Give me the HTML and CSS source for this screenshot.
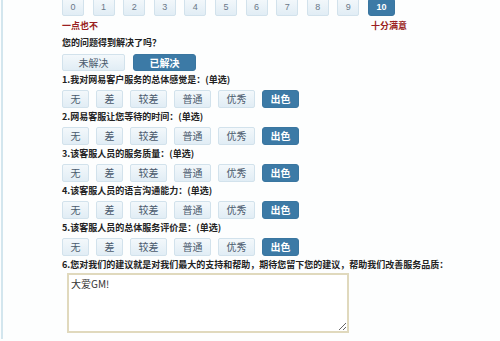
FILE: index.html
```html
<!DOCTYPE html>
<html lang="zh-CN">

<head>
    <meta charset="UTF-8">
    <title>服务评价</title>
    <link rel="stylesheet" href="styles.css">
</head>

<body>
    <div class="page">
        <div class="score-row">
            <span class="btn num">0</span>
            <span class="btn num">1</span>
            <span class="btn num">2</span>
            <span class="btn num">3</span>
            <span class="btn num">4</span>
            <span class="btn num">5</span>
            <span class="btn num">6</span>
            <span class="btn num">7</span>
            <span class="btn num">8</span>
            <span class="btn num">9</span>
            <span class="btn num wide on">10</span>
        </div>
        <div class="scale">
            <span>一点也不</span>
            <span>十分满意</span>
        </div>

        <p class="label ask">您的问题得到解决了吗？</p>
        <div class="toggle-row">
            <span class="btn toggle">未解决</span>
            <span class="btn toggle on">已解决</span>
        </div>

        <div class="question">
            <p class="label">1.我对网易客户服务的总体感觉是：(单选)</p>
            <div class="rate-row">
                <span class="btn rate short">无</span>
                <span class="btn rate short">差</span>
                <span class="btn rate">较差</span>
                <span class="btn rate">普通</span>
                <span class="btn rate">优秀</span>
                <span class="btn rate on">出色</span>
            </div>
        </div>
        <div class="question">
            <p class="label">2.网易客服让您等待的时间：(单选)</p>
            <div class="rate-row">
                <span class="btn rate short">无</span>
                <span class="btn rate short">差</span>
                <span class="btn rate">较差</span>
                <span class="btn rate">普通</span>
                <span class="btn rate">优秀</span>
                <span class="btn rate on">出色</span>
            </div>
        </div>
        <div class="question">
            <p class="label">3.该客服人员的服务质量：(单选)</p>
            <div class="rate-row">
                <span class="btn rate short">无</span>
                <span class="btn rate short">差</span>
                <span class="btn rate">较差</span>
                <span class="btn rate">普通</span>
                <span class="btn rate">优秀</span>
                <span class="btn rate on">出色</span>
            </div>
        </div>
        <div class="question">
            <p class="label">4.该客服人员的语言沟通能力：(单选)</p>
            <div class="rate-row">
                <span class="btn rate short">无</span>
                <span class="btn rate short">差</span>
                <span class="btn rate">较差</span>
                <span class="btn rate">普通</span>
                <span class="btn rate">优秀</span>
                <span class="btn rate on">出色</span>
            </div>
        </div>
        <div class="question">
            <p class="label">5.该客服人员的总体服务评价是：(单选)</p>
            <div class="rate-row">
                <span class="btn rate short">无</span>
                <span class="btn rate short">差</span>
                <span class="btn rate">较差</span>
                <span class="btn rate">普通</span>
                <span class="btn rate">优秀</span>
                <span class="btn rate on">出色</span>
            </div>
        </div>

        <p class="label">6.您对我们的建议就是对我们最大的支持和帮助，期待您留下您的建议，帮助我们改善服务品质：</p>
        <textarea class="advice">大爱GM!</textarea>
    </div>
</body>

</html>
```

FILE: styles.css
```css
html,
body {
    margin: 0;
    background: #fdfefe;
}

body {
    font-family: "Noto Sans CJK SC", "Liberation Sans", sans-serif;
    font-size: 9px;
    color: #222;
    overflow: hidden;
}

.page {
    margin-left: 1px;
    border-left: 2px solid #d3e6ee;
    height: 341px;
    padding-left: 59px;
    box-sizing: border-box;
}

p {
    margin: 0;
}

/* buttons */
.btn {
    display: flex;
    align-items: center;
    justify-content: center;
    box-sizing: border-box;
    background: linear-gradient(#f3f8fb, #e1edf5);
    border: 1px solid #d2e2ec;
    border-radius: 2px;
    color: #4a5a6c;
    line-height: 1;
}

.btn.on {
    background: #3c7aa6;
    border-color: #3a76a0;
    border-radius: 3px;
    color: #fff;
    font-weight: bold;
}

.score-row {
    display: flex;
    gap: 8.6px;
    margin-top: -2px;
}

.num {
    width: 22px;
    height: 18px;
    font-family: "Liberation Sans", sans-serif;
    font-size: 9px;
    color: #6a7888;
}

.num.wide {
    width: 27px;
}

.scale {
    display: flex;
    justify-content: space-between;
    width: 345px;
    margin-top: 4px;
    height: 12px;
    line-height: 12px;
    color: #9a1f22;
    font-weight: bold;
}

.label {
    height: 12px;
    line-height: 12px;
    font-weight: bold;
    white-space: nowrap;
}

.ask {
    margin-top: 5px;
}

.toggle-row {
    display: flex;
    gap: 8px;
    margin-top: 5px;
}

.toggle {
    width: 63px;
    height: 17px;
    font-size: 10px;
}

.question {
    margin-top: 3px;
}

.question + .label {
    margin-top: 3px;
}

.rate-row {
    display: flex;
    gap: 7px;
    margin-top: 4px;
}

.rate {
    width: 37px;
    height: 18px;
    font-size: 10px;
}

.rate.short {
    width: 27px;
}

.advice {
    display: block;
    margin: 2px 0 0 5px;
    width: 282px;
    height: 60px;
    box-sizing: border-box;
    border: 2px solid #e0d9bd;
    background: #fff;
    padding: 2px 2px;
    font-family: "Noto Sans CJK SC", "Liberation Sans", sans-serif;
    font-size: 10px;
    line-height: 13px;
    color: #333;
    resize: both;
    outline: none;
}
```
